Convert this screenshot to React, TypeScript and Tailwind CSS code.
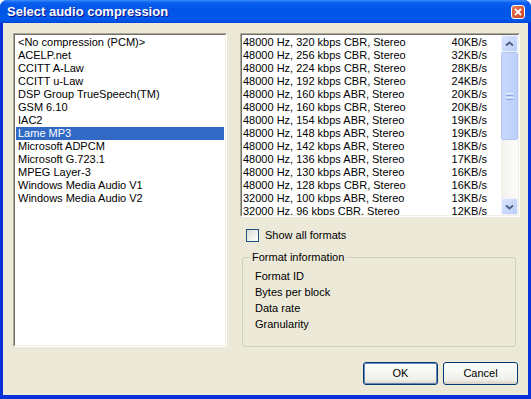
const codecs = [
  "<No compression (PCM)>",
  "ACELP.net",
  "CCITT A-Law",
  "CCITT u-Law",
  "DSP Group TrueSpeech(TM)",
  "GSM 6.10",
  "IAC2",
  "Lame MP3",
  "Microsoft ADPCM",
  "Microsoft G.723.1",
  "MPEG Layer-3",
  "Windows Media Audio V1",
  "Windows Media Audio V2",
];

const formats: [string, string][] = [
  ["48000 Hz, 320 kbps CBR, Stereo", "40KB/s"],
  ["48000 Hz, 256 kbps CBR, Stereo", "32KB/s"],
  ["48000 Hz, 224 kbps CBR, Stereo", "28KB/s"],
  ["48000 Hz, 192 kbps CBR, Stereo", "24KB/s"],
  ["48000 Hz, 160 kbps ABR, Stereo", "20KB/s"],
  ["48000 Hz, 160 kbps CBR, Stereo", "20KB/s"],
  ["48000 Hz, 154 kbps ABR, Stereo", "19KB/s"],
  ["48000 Hz, 148 kbps ABR, Stereo", "19KB/s"],
  ["48000 Hz, 142 kbps ABR, Stereo", "18KB/s"],
  ["48000 Hz, 136 kbps ABR, Stereo", "17KB/s"],
  ["48000 Hz, 130 kbps ABR, Stereo", "16KB/s"],
  ["48000 Hz, 128 kbps CBR, Stereo", "16KB/s"],
  ["32000 Hz, 100 kbps ABR, Stereo", "13KB/s"],
  ["32000 Hz, 96 kbps CBR, Stereo", "12KB/s"],
];

const info = ["Format ID", "Bytes per block", "Data rate", "Granularity"];

// sunken 3D frame used by both list boxes
const sunken =
  "border-t-[#aca899] border-l-[#aca899] border-b-white border-r-white border";
const sunkenInner =
  "border-t-[#716f64] border-l-[#716f64] border-b-[#f1efe2] border-r-[#f1efe2] border";

const ScrollButton = ({ down }: { down?: boolean }) => (
  <div className="w-[17px] h-[17px] rounded-[2px] border border-[#eef2fd] bg-[linear-gradient(135deg,#dbe5fd,#b9ccf9)] flex items-center justify-center">
    <svg width="9" height="6" viewBox="0 0 9 6">
      <path
        d={down ? "M1 1.5 L4.5 4.5 L8 1.5" : "M1 4.5 L4.5 1.5 L8 4.5"}
        fill="none"
        stroke="#4d6185"
        strokeWidth="2"
      />
    </svg>
  </div>
);

const Scrollbar = () => (
  <div className="w-[17px] h-full flex flex-col bg-[linear-gradient(to_right,#f3f1ec,#fefefb)]">
    <ScrollButton />
    <div className="h-[88px] rounded-[2px] border border-[#b1c4f3] bg-[linear-gradient(to_right,#c9d8fd,#bccffb)] flex flex-col items-center justify-center gap-[1px]">
      <div className="w-[7px] h-px bg-[#eef3fe]" />
      <div className="w-[7px] h-px bg-[#8ca8e6]" />
      <div className="w-[7px] h-px bg-[#eef3fe]" />
      <div className="w-[7px] h-px bg-[#8ca8e6]" />
    </div>
    <div className="flex-1" />
    <ScrollButton down />
  </div>
);

const Button = ({ label, def }: { label: string; def?: boolean }) => (
  <div
    className={`w-[75px] h-[23px] rounded-[3px] border flex items-center justify-center bg-[linear-gradient(to_bottom,#ffffff,#f0f0ea_80%,#d6d0c5)] ${
      def ? "border-[#003c74] shadow-[inset_0_0_0_1px_#6a87ba]" : "border-[#003c74]"
    }`}
  >
    {label}
  </div>
);

export default function App() {
  return (
    <div
      className="w-[531px] h-[399px] flex flex-col rounded-t-[7px] bg-[#0831d9] text-[11px] leading-[13px] text-black"
      style={{ fontFamily: '"Liberation Sans", Arial, sans-serif' }}
    >
      <div className="h-[23px] shrink-0 flex items-center justify-between pl-[7px] pr-[6px] rounded-t-[7px] bg-[linear-gradient(to_bottom,#3c8cf8_0%,#0a5ff0_12%,#0055e5_45%,#0058ee_85%,#0046d6_100%)]">
        <span className="text-white font-bold text-[13px] [text-shadow:1px_1px_#0f1089]">
          Select audio compression
        </span>
        <div className="w-[14px] h-[14px] rounded-[3px] border border-white bg-[linear-gradient(135deg,#e77b59,#c8401c)] flex items-center justify-center">
          <svg width="8" height="8" viewBox="0 0 8 8">
            <path d="M1 1 L7 7 M7 1 L1 7" stroke="white" strokeWidth="1.8" />
          </svg>
        </div>
      </div>

      <div className="flex-1 mx-[3px] mb-[4px] bg-[#ece9d8] flex flex-col">
        <div className="flex pt-[10px] pl-[10px] gap-[13px]">
          <div className={`w-[214px] h-[314px] ${sunken}`}>
            <div className={`h-full bg-white ${sunkenInner} pt-[1px] px-[1px]`}>
              {codecs.map((c) => (
                <div
                  key={c}
                  className={`h-[13px] pl-[2px] whitespace-nowrap ${
                    c === "Lame MP3" ? "bg-[#316ac5] text-white" : ""
                  }`}
                >
                  {c}
                </div>
              ))}
            </div>
          </div>

          <div className="w-[280px] flex flex-col">
            <div className={`h-[184px] ${sunken}`}>
              <div className={`h-full bg-white ${sunkenInner} flex`}>
                <div className="flex-1 overflow-hidden pt-[1px] pl-[1px] pr-[14px]">
                  {formats.map(([f, r]) => (
                    <div key={f} className="h-[13px] flex justify-between whitespace-nowrap">
                      <span>{f}</span>
                      <span>{r}</span>
                    </div>
                  ))}
                </div>
                <Scrollbar />
              </div>
            </div>

            <div className="flex items-center mt-[12px] ml-[6px] gap-[6px]">
              <div className="w-[13px] h-[13px] border border-[#1c5180] bg-[linear-gradient(135deg,#dcdcd7,#ffffff)]" />
              <span>Show all formats</span>
            </div>

            <fieldset className="ml-[2px] mt-[9px] w-[274px] h-[96px] border border-[#d0d0bf] rounded-[3px]">
              <legend className="ml-[7px] px-[2px] leading-[13px]">Format information</legend>
              <div className="pl-[12px] pt-[4px]">
                {info.map((t) => (
                  <div key={t} className="h-[16px] leading-[16px]">
                    {t}
                  </div>
                ))}
              </div>
            </fieldset>
          </div>
        </div>

        <div className="flex justify-end gap-[5px] mt-[15px] pr-[10px]">
          <Button label="OK" def />
          <Button label="Cancel" />
        </div>
      </div>
    </div>
  );
}
